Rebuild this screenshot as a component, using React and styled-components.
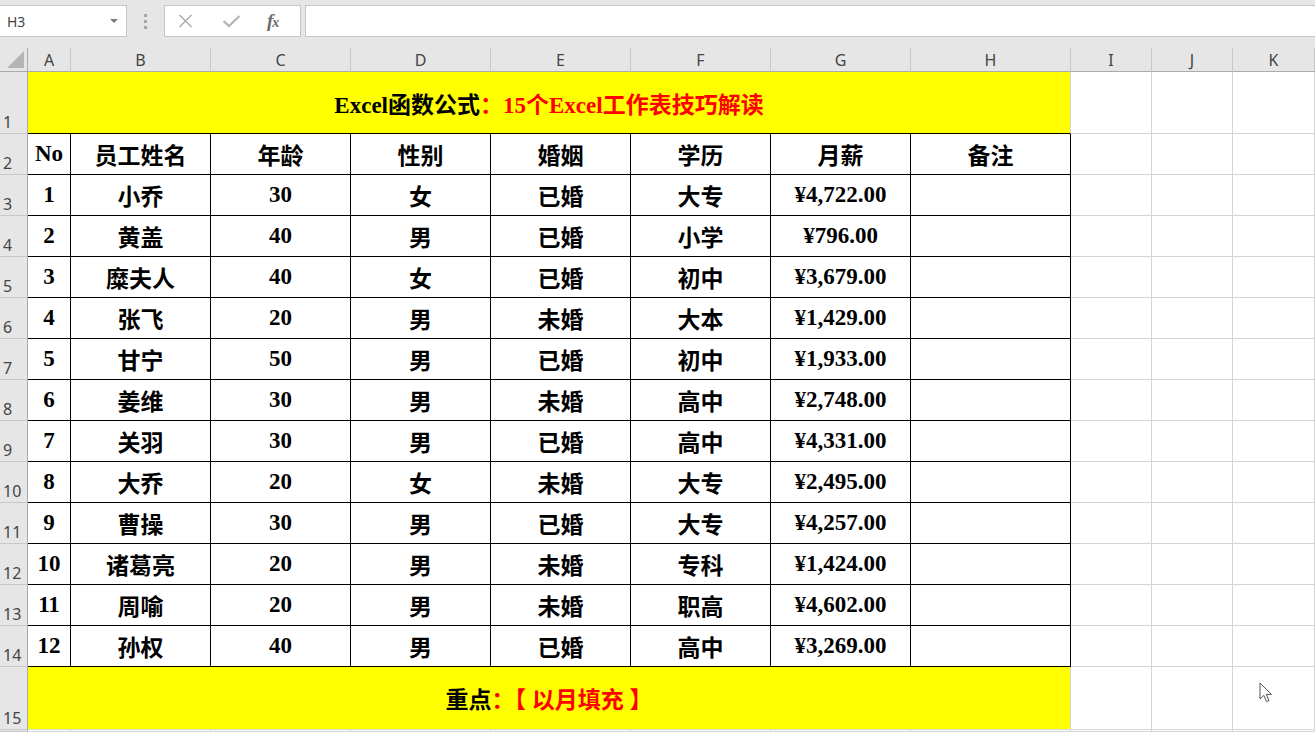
import React from "react";
import styled, { createGlobalStyle } from "styled-components";

const Global = createGlobalStyle`
  html, body { margin: 0; padding: 0; background: #ffffff; overflow: hidden; }
  * { box-sizing: border-box; }
`;

const Window = styled.div`
  position: relative;
  width: 1315px;
  height: 732px;
  background: #ffffff;
  overflow: hidden;
  font-family: "Noto Sans", "Noto Sans CJK SC", sans-serif;
`;

const FormulaBar = styled.div`
  height: 48px;
  background: #e6e6e6;
  display: flex;
  align-items: flex-start;
  padding-top: 5px;
`;

const NameBox = styled.div`
  width: 127px;
  height: 32px;
  background: #fff;
  border: 1px solid #c6c6c6;
  border-left: none;
  display: flex;
  align-items: center;
  justify-content: space-between;
  padding: 0 8px 0 7px;
  font-size: 14px;
  color: #444;
`;

const Caret = styled.span`
  width: 0;
  height: 0;
  border-left: 4px solid transparent;
  border-right: 4px solid transparent;
  border-top: 4px solid #7a7a7a;
`;

const Grip = styled.div`
  width: 37px;
  height: 32px;
  display: flex;
  flex-direction: column;
  align-items: center;
  justify-content: center;
  gap: 3px;
`;

const GripDot = styled.span`
  width: 3px;
  height: 3px;
  background: #a6a6a6;
`;

const FnBox = styled.div`
  width: 137px;
  height: 32px;
  background: #fff;
  border: 1px solid #c6c6c6;
  display: flex;
  align-items: center;
  gap: 29px;
  padding-left: 13px;
`;

const FxLabel = styled.span`
  font-family: "Liberation Serif", serif;
  font-style: italic;
  font-weight: bold;
  font-size: 19px;
  color: #6b6b6b;
  letter-spacing: -1px;
  margin-left: -3px;
  & small { font-size: 14px; }
`;

const FormulaInput = styled.div`
  flex: 1;
  height: 32px;
  margin-left: 4px;
  background: #fff;
  border: 1px solid #c6c6c6;
  border-right: none;
`;

const Sheet = styled.div`
  display: grid;
  grid-template-columns: 28px 43px repeat(6, 140px) 160px 81px 81px 1fr;
  grid-template-rows: 24px 62px repeat(13, 41px) 63px 1fr;
  height: 684px;
`;

const Corner = styled.div`
  position: relative;
  background: #e6e6e6;
  border-right: 1px solid #ababab;
  border-bottom: 1px solid #ababab;
  &::after {
    content: "";
    position: absolute;
    right: 3px;
    bottom: 3px;
    width: 17px;
    height: 17px;
    background: #b5b5b5;
    clip-path: polygon(100% 0, 100% 100%, 0 100%);
  }
`;

const ColHead = styled.div`
  background: #e6e6e6;
  border-right: 1px solid #c8c8c8;
  border-bottom: 1px solid #ababab;
  display: flex;
  align-items: flex-end;
  justify-content: center;
  padding-bottom: 1px;
  font-size: 16px;
  line-height: 20px;
  color: #444;
`;

const RowHead = styled.div`
  background: #e6e6e6;
  border-right: 1px solid #ababab;
  border-bottom: 1px solid #c8c8c8;
  display: flex;
  align-items: flex-end;
  padding: 0 0 1px 3px;
  font-size: 16px;
  line-height: 20px;
  color: #444;
`;

const Blank = styled.div`
  border-right: 1px solid #d4d4d4;
  border-bottom: 1px solid #d4d4d4;
`;

const Banner = styled.div`
  grid-column: span 8;
  background: #ffff00;
  border-right: 1px solid #d4d4d4;
  border-bottom: 1px solid ${(p) => (p.$closed ? "#000" : "#d4d4d4")};
  display: flex;
  align-items: center;
  justify-content: center;
  font-family: "Liberation Serif", "Noto Sans CJK SC", serif;
  font-weight: bold;
  font-size: 23px;
  color: #000;
  white-space: pre;
`;

const Red = styled.span`
  color: #ff0000;
`;

const DataCell = styled.div`
  border-right: 1px solid #000;
  border-bottom: 1px solid #000;
  display: flex;
  align-items: center;
  justify-content: center;
  font-family: "Liberation Serif", "Noto Sans CJK SC", serif;
  font-weight: bold;
  font-size: 23px;
  color: #000;
  white-space: nowrap;
`;

const Cursor = styled.svg`
  position: absolute;
  left: 1259px;
  top: 682px;
  width: 14px;
  height: 21px;
`;

const headers = ["No", "员工姓名", "年龄", "性别", "婚姻", "学历", "月薪", "备注"];

const rows = [
  ["1", "小乔", "30", "女", "已婚", "大专", "¥4,722.00"],
  ["2", "黄盖", "40", "男", "已婚", "小学", "¥796.00"],
  ["3", "糜夫人", "40", "女", "已婚", "初中", "¥3,679.00"],
  ["4", "张飞", "20", "男", "未婚", "大本", "¥1,429.00"],
  ["5", "甘宁", "50", "男", "已婚", "初中", "¥1,933.00"],
  ["6", "姜维", "30", "男", "未婚", "高中", "¥2,748.00"],
  ["7", "关羽", "30", "男", "已婚", "高中", "¥4,331.00"],
  ["8", "大乔", "20", "女", "未婚", "大专", "¥2,495.00"],
  ["9", "曹操", "30", "男", "已婚", "大专", "¥4,257.00"],
  ["10", "诸葛亮", "20", "男", "未婚", "专科", "¥1,424.00"],
  ["11", "周喻", "20", "男", "未婚", "职高", "¥4,602.00"],
  ["12", "孙权", "40", "男", "已婚", "高中", "¥3,269.00"],
];

const cols = ["A", "B", "C", "D", "E", "F", "G", "H", "I", "J", "K"];

const TrailingBlanks = () => (
  <>
    <Blank />
    <Blank />
    <Blank />
  </>
);

export default function App() {
  return (
    <>
      <Global />
      <Window>
        <FormulaBar>
          <NameBox>
            <span>H3</span>
            <Caret />
          </NameBox>
          <Grip>
            <GripDot />
            <GripDot />
            <GripDot />
          </Grip>
          <FnBox>
            <svg width="15" height="14" viewBox="0 0 15 14">
              <path d="M1.5 1 L13.5 13 M13.5 1 L1.5 13" stroke="#a9a9a9" strokeWidth="1.4" fill="none" />
            </svg>
            <svg width="19" height="14" viewBox="0 0 19 14">
              <path d="M1.5 7 L7 12 L17.5 2" stroke="#b3b3b3" strokeWidth="2.2" fill="none" />
            </svg>
            <FxLabel>
              f<small>x</small>
            </FxLabel>
          </FnBox>
          <FormulaInput />
        </FormulaBar>

        <Sheet>
          <Corner />
          {cols.map((c) => (
            <ColHead key={c}>{c}</ColHead>
          ))}

          <RowHead>1</RowHead>
          <Banner $closed>
            <span>
              Excel函数公式<Red>：15个Excel工作表技巧解读</Red>
            </span>
          </Banner>
          <TrailingBlanks />

          <RowHead>2</RowHead>
          {headers.map((h) => (
            <DataCell key={h}>{h}</DataCell>
          ))}
          <TrailingBlanks />

          {rows.map((r, i) => (
            <React.Fragment key={r[0]}>
              <RowHead>{i + 3}</RowHead>
              {r.map((v, j) => (
                <DataCell key={j}>{v}</DataCell>
              ))}
              <DataCell />
              <TrailingBlanks />
            </React.Fragment>
          ))}

          <RowHead>15</RowHead>
          <Banner>
            <span>
              重点<Red>：【 以月填充 】</Red>
            </span>
          </Banner>
          <TrailingBlanks />

          <RowHead />
          {cols.map((c) => (
            <Blank key={c} />
          ))}
        </Sheet>

        <Cursor viewBox="0 0 14 21">
          <path
            d="M1 1 L1 17 L4.8 13.4 L7.6 19.6 L10 18.6 L7.3 12.4 L12.4 12.4 Z"
            fill="#fff"
            stroke="#555"
            strokeWidth="1"
            strokeLinejoin="round"
          />
        </Cursor>
      </Window>
    </>
  );
}
